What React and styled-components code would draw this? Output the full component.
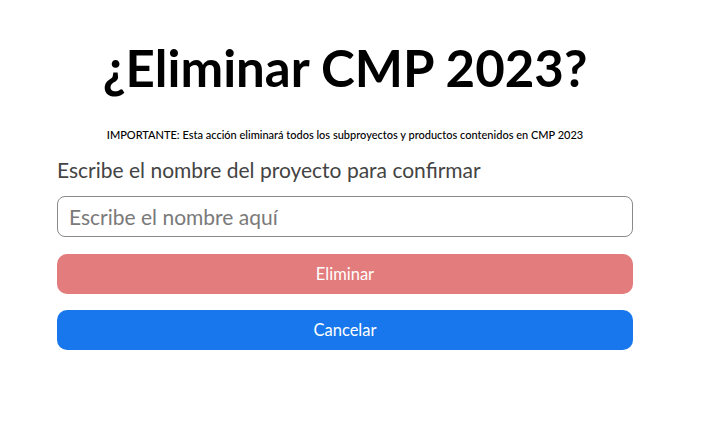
import React from 'react';
import styled, { createGlobalStyle } from 'styled-components'

const GlobalStyle = createGlobalStyle`
  body {
    margin: 0;
    background: #fff;
    font-family: "Lato", "Noto Sans", sans-serif;
  }
`

const Page = styled.div`
  width: 576px;
  padding: 36px 0 0 57px;
  display: flex;
  flex-direction: column;
`

const Title = styled.h1`
  margin: 0;
  text-align: center;
  font-size: 51px;
  font-weight: 700;
  line-height: 63px;
  color: #000;
`

const Notice = styled.p`
  margin: 29px 0 0;
  text-align: center;
  font-size: 11px;
  font-weight: 500;
  line-height: 14px;
  color: #000;
`

const Label = styled.label`
  margin-top: 16px;
  font-size: 21px;
  line-height: 24px;
  color: #444;
`

const Input = styled.input`
  box-sizing: border-box;
  margin-top: 14px;
  width: 100%;
  height: 41px;
  padding: 0 11px;
  border: 1px solid #8a8a8a;
  border-radius: 8px;
  font-family: inherit;
  font-size: 21px;
  color: #333;
  outline: none;
  &::placeholder {
    color: #7a7a7a;
  }
`

const Button = styled.button`
  box-sizing: border-box;
  width: 100%;
  height: 40px;
  margin-top: ${p => p.$gap}px;
  border: none;
  border-radius: 10px;
  background: ${p => p.$bg};
  color: #fff;
  font-family: inherit;
  font-size: 16.5px;
  cursor: pointer;
`

export default function App() {
  return (
    <>
      <GlobalStyle />
      <Page>
        <Title>¿Eliminar CMP 2023?</Title>
        <Notice>IMPORTANTE: Esta acción eliminará todos los subproyectos y productos contenidos en CMP 2023</Notice>
        <Label>Escribe el nombre del proyecto para confirmar</Label>
        <Input placeholder="Escribe el nombre aquí" />
        <Button $bg="#e37c7c" $gap={17}>Eliminar</Button>
        <Button $bg="#1877ec" $gap={16}>Cancelar</Button>
      </Page>
    </>
  )
}
